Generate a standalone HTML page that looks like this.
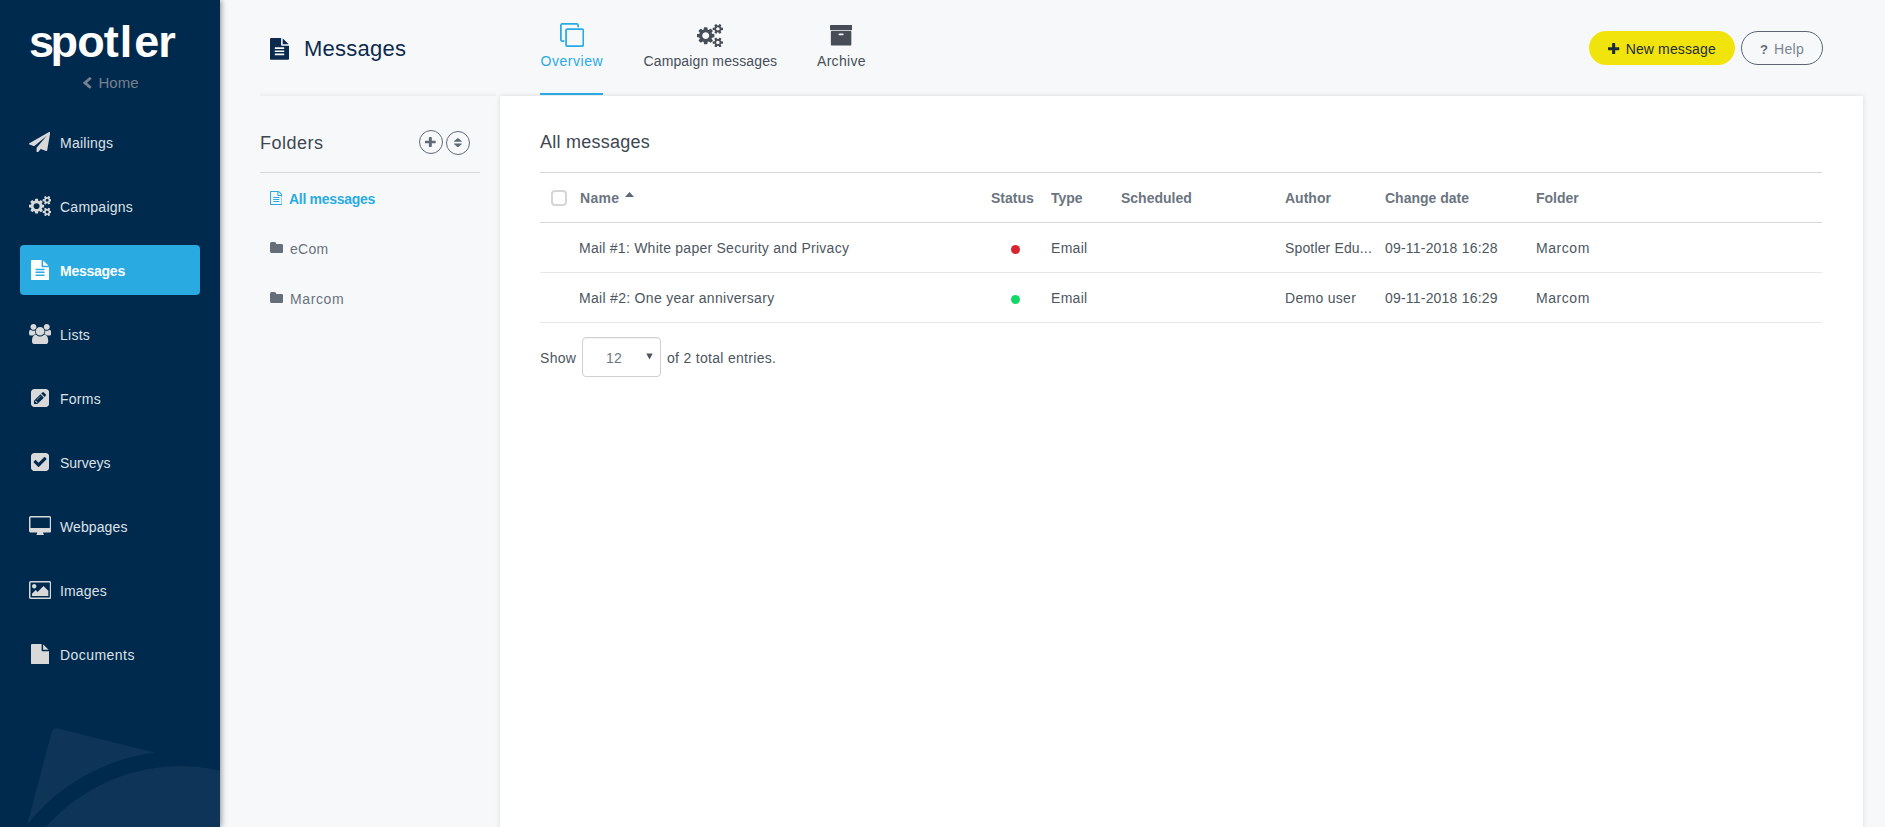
<!DOCTYPE html>
<html lang="en">
<head>
<meta charset="utf-8">
<title>Messages</title>
<style>
*{box-sizing:border-box;margin:0;padding:0}
html,body{width:1885px;height:827px;overflow:hidden}
body{background:#f7f8fa;font-family:"Liberation Sans",sans-serif;font-size:14px;color:#4a545e;position:relative}
.abs{position:absolute}
.t{position:absolute;white-space:nowrap;line-height:1}
/* sidebar */
#side{position:absolute;left:0;top:0;width:220px;height:827px;background:#00294e;box-shadow:1px 0 6px rgba(0,0,0,.44);overflow:hidden;z-index:5}
#logo{left:29px;top:19px;font-size:45px;font-weight:bold;color:#fff;letter-spacing:-.55px}
#home{left:98.500px;top:75px;font-size:15px;color:#77818f}
.nav{position:absolute;left:20px;width:180px;height:50px;border-radius:4px}
.nav span{position:absolute;left:40px;top:19px;font-size:14px;line-height:1;color:#dde1e6;white-space:nowrap;letter-spacing:.25px}
.nav.act{background:#29abe2}
.nav.act span{font-weight:bold;color:#fff;letter-spacing:-.25px}
/* header */
#title{left:304px;top:38px;font-size:22px;color:#0c2a4e;letter-spacing:.25px}
.tab{position:absolute;top:54px;font-size:14px;line-height:1;color:#464f59;white-space:nowrap;letter-spacing:.3px}
#panel{position:absolute;left:500px;top:96px;width:1363px;height:740px;background:#fff;box-shadow:0 0 5px rgba(0,0,0,.12)}
.hline{position:absolute;height:1px;background:#d5d7da}
.h2{font-size:18px;color:#3e4751;letter-spacing:.5px}
.fold{font-size:14px;color:#69727c;letter-spacing:.25px}
.th{font-size:14px;font-weight:bold;color:#6b7580;letter-spacing:0}
.td{font-size:14px;color:#4d5660;letter-spacing:.3px}
</style>
</head>
<body>

<div id="side">
  <svg class="abs" style="left:0;top:700px" width="220" height="127" viewBox="0 700 220 127">
    <path d="M27 825 L51.360 733 Q52.900 727.200 58.720 728.650 L155 752.600 A194.500 194.500 0 0 0 27 825 Z" fill="#0e3457"/>
    <circle cx="180.500" cy="945" r="179" fill="#0e3457"/>
  </svg>
  <div class="t" id="logo" aria-label="spotler" title="spotler"><span style="letter-spacing:-3.650px">s</span><span style="letter-spacing:-.55px">p</span><span style="letter-spacing:-1.050px">o</span><span style="letter-spacing:.95px">t</span><span style="letter-spacing:2.050px">l</span><span style="letter-spacing:-1.050px">e</span><span style="letter-spacing:0">r</span></div>
  <svg class="abs" style="left:83px;top:77px" width="8.6" height="11.7" viewBox="410 26 1036 1612" preserveAspectRatio="none"><path fill="#77818f" d="M1427 301l-531 531 531 531q19 19 19 45t-19 45l-166 166q-19 19-45 19t-45-19l-742-742q-19-19-19-45t19-45l742-742q19-19 45-19t45 19l166 166q19 19 19 45t-19 45z"/></svg>
  <div class="t" id="home">Home</div>

  <div class="nav" style="top:117px"><span>Mailings</span></div>
  <svg class="abs" style="left:29.2px;top:131.6px" width="21.2" height="20.6" viewBox="-0.11 0 1792.03 1792" preserveAspectRatio="none"><path fill="#d9d9d9" d="M1764 11q33 24 27 64l-256 1536q-5 29-32 45-14 8-31 8-11 0-24-5l-453-185-242 295q-18 23-49 23-13 0-22-4-19-7-30.500-23.500t-11.500-36.500v-349l864-1059-1069 925-395-162q-37-14-40-55-2-40 32-59l1664-960q15-9 32-9 20 0 36 11z"/></svg>
  <div class="nav" style="top:181px"><span>Campaigns</span></div>
  <svg class="abs" style="left:28.8px;top:195.7px" width="22.7" height="20.2" viewBox="0 -240 1920 1761" preserveAspectRatio="none"><path fill="#d9d9d9" d="M896 640q0-106-75-181t-181-75-181 75-75 181 75 181 181 75 181-75 75-181zm768 512q0-52-38-90t-90-38-90 38-38 90q0 53 37.500 90.500t90.500 37.500 90.500-37.500 37.500-90.500zm0-1024q0-52-38-90t-90-38-90 38-38 90q0 53 37.500 90.500t90.500 37.500 90.500-37.500 37.500-90.500zm-384 421v185q0 10-7 19.500t-16 10.500l-155 24q-11 35-32 76 34 48 90 115 7 11 7 20 0 12-7 19-23 30-82.500 89.500t-78.500 59.500q-11 0-21-7l-115-90q-37 19-77 31-11 108-23 155-7 24-30 24h-186q-11 0-20-7.500t-10-17.500l-23-153q-34-10-75-31l-118 89q-7 7-20 7-11 0-21-8-144-133-144-160 0-9 7-19 10-14 41-53t47-61q-23-44-35-82l-152-24q-10-1-17-9.500t-7-19.500v-185q0-10 7-19.500t16-10.500l155-24q11-35 32-76-34-48-90-115-7-11-7-20 0-12 7-20 22-30 82-89t79-59q11 0 21 7l115 90q34-18 77-32 11-108 23-154 7-24 30-24h186q11 0 20 7.500t10 17.500l23 153q34 10 75 31l118-89q8-7 20-7 11 0 21 8 144 133 144 160 0 8-7 19-12 16-42 54t-45 60q23 48 34 82l152 23q10 2 17 10.500t7 19.500zm640 533v140q0 16-149 31-12 27-30 52 51 113 51 138 0 4-4 7-122 71-124 71-8 0-46-47t-52-68q-20 2-30 2t-30-2q-14 21-52 68t-46 47q-2 0-124-71-4-3-4-7 0-25 51-138-18-25-30-52-149-15-149-31v-140q0-16 149-31 13-29 30-52-51-113-51-138 0-4 4-7 4-2 35-20t59-34 30-16q8 0 46 46.500t52 67.500q20-2 30-2t30 2q51-71 92-112l6-2q4 0 124 70 4 3 4 7 0 25-51 138 17 23 30 52 149 15 149 31zm0-1024v140q0 16-149 31-12 27-30 52 51 113 51 138 0 4-4 7-122 71-124 71-8 0-46-47t-52-68q-20 2-30 2t-30-2q-14 21-52 68t-46 47q-2 0-124-71-4-3-4-7 0-25 51-138-18-25-30-52-149-15-149-31v-140q0-16 149-31 13-29 30-52-51-113-51-138 0-4 4-7 4-2 35-20t59-34 30-16q8 0 46 46.500t52 67.500q20-2 30-2t30 2q51-71 92-112l6-2q4 0 124 70 4 3 4 7 0 25-51 138 17 23 30 52 149 15 149 31z"/></svg>
  <div class="nav act" style="top:245px"><span>Messages</span></div>
  <svg class="abs" style="left:31px;top:259.7px" width="18.15" height="20.3" viewBox="128 0 1536 1792" preserveAspectRatio="none"><path fill="#ffffff" d="M1596 476q14 14 28 36h-472v-472q22 14 36 28zm-476 164h544v1056q0 40-28 68t-68 28h-1344q-40 0-68-28t-28-68v-1600q0-40 28-68t68-28h800v544q0 40 28 68t68 28zm160 736v-64q0-14-9-23t-23-9h-704q-14 0-23 9t-9 23v64q0 14 9 23t23 9h704q14 0 23-9t9-23zm0-256v-64q0-14-9-23t-23-9h-704q-14 0-23 9t-9 23v64q0 14 9 23t23 9h704q14 0 23-9t9-23zm0-256v-64q0-14-9-23t-23-9h-704q-14 0-23 9t-9 23v64q0 14 9 23t23 9h704q14 0 23-9t9-23z"/></svg>
  <div class="nav" style="top:309px"><span>Lists</span></div>
  <svg class="abs" style="left:29px;top:323.8px" width="22.2" height="20.3" viewBox="0 0 1920 1792" preserveAspectRatio="none"><path fill="#d9d9d9" d="M593 896q-162 5-265 128h-134q-82 0-138-40.500t-56-118.500q0-353 124-353 6 0 43.500 21t97.500 42.500 119 21.500q67 0 133-23-5 37-5 66 0 139 81 256zm1071 637q0 120-73 189.500t-194 69.500h-874q-121 0-194-69.500t-73-189.500q0-53 3.500-103.500t14-109 26.500-108.500 43-97.500 62-81 85.500-53.500 111.500-20q10 0 43 21.500t73 48 107 48 135 21.500 135-21.500 107-48 73-48 43-21.500q61 0 111.500 20t85.500 53.500 62 81 43 97.500 26.500 108.500 14 109 3.500 103.500zm-1024-1277q0 106-75 181t-181 75-181-75-75-181 75-181 181-75 181 75 75 181zm704 384q0 159-112.500 271.500t-271.500 112.500-271.500-112.500-112.500-271.500 112.500-271.500 271.500-112.500 271.500 112.500 112.500 271.500zm576 225q0 78-56 118.500t-138 40.500h-134q-103-123-265-128 81-117 81-256 0-29-5-66 66 23 133 23 59 0 119-21.500t97.500-42.500 43.500-21q124 0 124 353zm-128-609q0 106-75 181t-181 75-181-75-75-181 75-181 181-75 181 75 75 181z"/></svg>
  <div class="nav" style="top:373px"><span>Forms</span></div>
  <svg class="abs" style="left:31px;top:388.8px" width="18.1" height="18.1" viewBox="0 128 1536 1536" preserveAspectRatio="none"><path fill="#d9d9d9" d="M404 1108l152 152-52 52h-56v-96h-96v-56zm414-390q14 13-3 30l-291 291q-17 17-30 3-14-13 3-30l291-291q17-17 30-3zm-274 690l544-544-288-288-544 544v288h288zm608-608l92-92q28-28 28-68t-28-68l-152-152q-28-28-68-28t-68 28l-92 92zm384-384v960q0 119-84.500 203.500t-203.500 84.500h-960q-119 0-203.500-84.500t-84.500-203.500v-960q0-119 84.500-203.500t203.500-84.500h960q119 0 203.500 84.500t84.500 203.500z"/></svg>
  <div class="nav" style="top:437px"><span style="letter-spacing:0">Surveys</span></div>
  <svg class="abs" style="left:31px;top:452.8px" width="18.1" height="18.1" viewBox="128 128 1536 1536" preserveAspectRatio="none"><path fill="#d9d9d9" d="M813 1299l614-614q19-19 19-45t-19-45l-102-102q-19-19-45-19t-45 19l-467 467-211-211q-19-19-45-19t-45 19l-102 102q-19 19-19 45t19 45l358 358q19 19 45 19t45-19zm851-883v960q0 119-84.500 203.500t-203.500 84.500h-960q-119 0-203.500-84.500t-84.500-203.500v-960q0-119 84.500-203.500t203.500-84.500h960q119 0 203.500 84.500t84.500 203.500z"/></svg>
  <div class="nav" style="top:501px"><span style="letter-spacing:.1px">Webpages</span></div>
  <svg class="abs" style="left:28.8px;top:515.5px" width="22.3" height="19.6" viewBox="-64 0 1920 1664" preserveAspectRatio="none"><path fill="#d9d9d9" d="M1728 992v-832q0-13-9.500-22.500t-22.500-9.500h-1600q-13 0-22.500 9.500t-9.500 22.500v832q0 13 9.500 22.500t22.500 9.500h1600q13 0 22.500-9.500t9.500-22.500zm128-832v1088q0 66-47 113t-113 47h-544q0 37 16 77.500t32 71 16 43.500q0 26-19 45t-45 19h-512q-26 0-45-19t-19-45q0-14 16-44t32-70 16-78h-544q-66 0-113-47t-47-113v-1088q0-66 47-113t113-47h1600q66 0 113 47t47 113z"/></svg>
  <div class="nav" style="top:565px"><span style="letter-spacing:.15px">Images</span></div>
  <svg class="abs" style="left:28.8px;top:580.9px" width="22.3" height="18" viewBox="0 128 1920 1536" preserveAspectRatio="none"><path fill="#d9d9d9" d="M640 576q0 80-56 136t-136 56-136-56-56-136 56-136 136-56 136 56 56 136zm1024 384v448h-1408v-192l320-320 160 160 512-512zm96-704h-1600q-13 0-22.500 9.500t-9.500 22.500v1216q0 13 9.500 22.500t22.500 9.500h1600q13 0 22.500-9.500t9.500-22.500v-1216q0-13-9.500-22.500t-22.500-9.500zm160 32v1216q0 66-47 113t-113 47h-1600q-66 0-113-47t-47-113v-1216q0-66 47-113t113-47h1600q66 0 113 47t47 113z"/></svg>
  <div class="nav" style="top:629px"><span style="letter-spacing:.45px">Documents</span></div>
  <svg class="abs" style="left:31px;top:643.7px" width="18.15" height="20.4" viewBox="128 0 1536 1792" preserveAspectRatio="none"><path fill="#d9d9d9" d="M1152 512v-472q22 14 36 28l408 408q14 14 28 36h-472zm-128 32q0 40 28 68t68 28h544v1056q0 40-28 68t-68 28h-1344q-40 0-68-28t-28-68v-1600q0-40 28-68t68-28h800v544z"/></svg>
</div>

<!-- header -->
<svg class="abs" style="left:270px;top:38px" width="19" height="21.8" viewBox="128 0 1536 1792" preserveAspectRatio="none"><path fill="#0c2a4e" d="M1596 476q14 14 28 36h-472v-472q22 14 36 28zm-476 164h544v1056q0 40-28 68t-68 28h-1344q-40 0-68-28t-28-68v-1600q0-40 28-68t68-28h800v544q0 40 28 68t68 28zm160 736v-64q0-14-9-23t-23-9h-704q-14 0-23 9t-9 23v64q0 14 9 23t23 9h704q14 0 23-9t9-23zm0-256v-64q0-14-9-23t-23-9h-704q-14 0-23 9t-9 23v64q0 14 9 23t23 9h704q14 0 23-9t9-23zm0-256v-64q0-14-9-23t-23-9h-704q-14 0-23 9t-9 23v64q0 14 9 23t23 9h704q14 0 23-9t9-23z"/></svg>
<div class="t" id="title">Messages</div>

<div class="tab" style="left:540.500px;color:#29abe2;letter-spacing:.55px">Overview</div>
<div class="tab" style="left:643.500px;letter-spacing:.13px">Campaign messages</div>
<div class="tab" style="left:817px">Archive</div>
<div class="abs" style="left:540px;top:93px;width:63px;height:2px;background:#29abe2;z-index:3"></div>

<div class="abs" style="left:260px;top:91px;width:236px;height:5px;background:linear-gradient(to bottom,#f6f7f9 0,#f6f7f9 20%,#f5f6f8 20%,#f5f6f8 40%,#f2f3f5 40%,#f2f3f5 60%,#f0f1f3 60%,#f0f1f3 80%,#edeef0 80%)"></div>
<div id="panel"></div>

<!-- tab icons -->
<svg class="abs" style="left:559.9px;top:23.1px" width="24.2" height="24.1" viewBox="0 0 1792 1792" preserveAspectRatio="none"><path fill="#29abe2" d="M1664 1632v-1088q0-13-9.500-22.500t-22.500-9.500h-1088q-13 0-22.500 9.500t-9.500 22.500v1088q0 13 9.500 22.500t22.500 9.500h1088q13 0 22.500-9.500t9.500-22.500zm128-1088v1088q0 66-47 113t-113 47h-1088q-66 0-113-47t-47-113v-1088q0-66 47-113t113-47h1088q66 0 113 47t47 113zm-384-384v160h-128v-160q0-13-9.500-22.500t-22.500-9.500h-1088q-13 0-22.500 9.500t-9.500 22.500v1088q0 13 9.500 22.500t22.500 9.500h160v128h-160q-66 0-113-47t-47-113v-1088q0-66 47-113t113-47h1088q66 0 113 47t47 113z"/></svg>
<svg class="abs" style="left:697px;top:23.7px" width="26.1" height="23.4" viewBox="0 -240 1920 1761" preserveAspectRatio="none"><path fill="#464d56" d="M896 640q0-106-75-181t-181-75-181 75-75 181 75 181 181 75 181-75 75-181zm768 512q0-52-38-90t-90-38-90 38-38 90q0 53 37.500 90.500t90.500 37.500 90.500-37.500 37.500-90.500zm0-1024q0-52-38-90t-90-38-90 38-38 90q0 53 37.500 90.500t90.500 37.500 90.500-37.500 37.500-90.500zm-384 421v185q0 10-7 19.500t-16 10.500l-155 24q-11 35-32 76 34 48 90 115 7 11 7 20 0 12-7 19-23 30-82.500 89.500t-78.500 59.500q-11 0-21-7l-115-90q-37 19-77 31-11 108-23 155-7 24-30 24h-186q-11 0-20-7.500t-10-17.500l-23-153q-34-10-75-31l-118 89q-7 7-20 7-11 0-21-8-144-133-144-160 0-9 7-19 10-14 41-53t47-61q-23-44-35-82l-152-24q-10-1-17-9.500t-7-19.500v-185q0-10 7-19.500t16-10.500l155-24q11-35 32-76-34-48-90-115-7-11-7-20 0-12 7-20 22-30 82-89t79-59q11 0 21 7l115 90q34-18 77-32 11-108 23-154 7-24 30-24h186q11 0 20 7.500t10 17.500l23 153q34 10 75 31l118-89q8-7 20-7 11 0 21 8 144 133 144 160 0 8-7 19-12 16-42 54t-45 60q23 48 34 82l152 23q10 2 17 10.500t7 19.500zm640 533v140q0 16-149 31-12 27-30 52 51 113 51 138 0 4-4 7-122 71-124 71-8 0-46-47t-52-68q-20 2-30 2t-30-2q-14 21-52 68t-46 47q-2 0-124-71-4-3-4-7 0-25 51-138-18-25-30-52-149-15-149-31v-140q0-16 149-31 13-29 30-52-51-113-51-138 0-4 4-7 4-2 35-20t59-34 30-16q8 0 46 46.500t52 67.500q20-2 30-2t30 2q51-71 92-112l6-2q4 0 124 70 4 3 4 7 0 25-51 138 17 23 30 52 149 15 149 31zm0-1024v140q0 16-149 31-12 27-30 52 51 113 51 138 0 4-4 7-122 71-124 71-8 0-46-47t-52-68q-20 2-30 2t-30-2q-14 21-52 68t-46 47q-2 0-124-71-4-3-4-7 0-25 51-138-18-25-30-52-149-15-149-31v-140q0-16 149-31 13-29 30-52-51-113-51-138 0-4 4-7 4-2 35-20t59-34 30-16q8 0 46 46.500t52 67.500q20-2 30-2t30 2q51-71 92-112l6-2q4 0 124 70 4 3 4 7 0 25-51 138 17 23 30 52 149 15 149 31z"/></svg>
<svg class="abs" style="left:829.9px;top:25.3px" width="22.2" height="20.5" viewBox="64 128 1664 1536" preserveAspectRatio="none"><path fill="#464d56" d="M1088 832q0-26-19-45t-45-19h-256q-26 0-45 19t-19 45 19 45 45 19h256q26 0 45-19t19-45zm576-192v960q0 26-19 45t-45 19h-1408q-26 0-45-19t-19-45v-960q0-26 19-45t45-19h1408q26 0 45 19t19 45zm64-448v256q0 26-19 45t-45 19h-1536q-26 0-45-19t-19-45v-256q0-26 19-45t45-19h1536q26 0 45 19t19 45z"/></svg>

<!-- buttons -->
<div class="abs" style="left:1589px;top:31px;width:146px;height:34px;border-radius:17px;background:#f1e40d"></div>
<svg class="abs" style="left:1608.3px;top:42.8px" width="11.3" height="11.4" viewBox="192 128 1408 1408" preserveAspectRatio="none"><path fill="#1b2a3a" d="M1600 736v192q0 40-28 68t-68 28h-416v416q0 40-28 68t-68 28h-192q-40 0-68-28t-28-68v-416h-416q-40 0-68-28t-28-68v-192q0-40 28-68t68-28h416v-416q0-40 28-68t68-28h192q40 0 68 28t28 68v416h416q40 0 68 28t28 68z"/></svg>
<div class="t" style="left:1625.700px;top:42px;font-size:14px;color:#1f2c39;letter-spacing:.13px">New message</div>
<div class="abs" style="left:1741px;top:31px;width:82px;height:34px;border-radius:17px;border:1px solid #5b6672"></div>
<div class="t" style="left:1760px;top:43px;font-size:13px;font-weight:bold;color:#5f6a76">?</div>
<div class="t" style="left:1774px;top:42px;font-size:14px;color:#7a8592;letter-spacing:.3px">Help</div>

<!-- folders -->
<div class="t h2" style="left:260px;top:134px">Folders</div>
<div class="abs" style="left:419px;top:130px;width:24px;height:24px;border-radius:12px;border:1px solid #606a74"></div>
<svg class="abs" style="left:425.2px;top:137.2px" width="10.7" height="10" viewBox="192 128 1408 1408" preserveAspectRatio="none"><path fill="#606a74" d="M1600 736v192q0 40-28 68t-68 28h-416v416q0 40-28 68t-68 28h-192q-40 0-68-28t-28-68v-416h-416q-40 0-68-28t-28-68v-192q0-40 28-68t68-28h416v-416q0-40 28-68t68-28h192q40 0 68 28t28 68v416h416q40 0 68 28t28 68z"/></svg>
<div class="abs" style="left:446px;top:131px;width:24px;height:24px;border-radius:12px;border:1px solid #606a74"></div>
<svg class="abs" style="left:454.3px;top:137.9px" width="7.8" height="9.3" viewBox="384 192 1024 1408" preserveAspectRatio="none"><path fill="#606a74" d="M1408 1088q0 26-19 45l-448 448q-19 19-45 19t-45-19l-448-448q-19-19-19-45t19-45 45-19h896q26 0 45 19t19 45zm0-384q0 26-19 45t-45 19h-896q-26 0-45-19t-19-45 19-45l448-448q19-19 45-19t45 19l448 448q19 19 19 45z"/></svg>
<div class="hline" style="left:260px;top:172px;width:220px"></div>

<svg class="abs" style="left:269.8px;top:191.1px" width="12.6" height="13.9" viewBox="128 0 1536 1792" preserveAspectRatio="none"><path fill="#29abe2" d="M1596 380q28 28 48 76t20 88v1152q0 40-28 68t-68 28h-1344q-40 0-68-28t-28-68v-1600q0-40 28-68t68-28h896q40 0 88 20t76 48zm-444-244v376h376q-10-29-22-41l-313-313q-12-12-41-22zm384 1528v-1024h-416q-40 0-68-28t-28-68v-416h-768v1536h1280zm-1024-864q0-14 9-23t23-9h704q14 0 23 9t9 23v64q0 14-9 23t-23 9h-704q-14 0-23-9t-9-23v-64zm736 224q14 0 23 9t9 23v64q0 14-9 23t-23 9h-704q-14 0-23-9t-9-23v-64q0-14 9-23t23-9h704zm0 256q14 0 23 9t9 23v64q0 14-9 23t-23 9h-704q-14 0-23-9t-9-23v-64q0-14 9-23t23-9h704z"/></svg>
<div class="t" style="left:289px;top:192px;font-size:14px;font-weight:bold;color:#29abe2;letter-spacing:-.3px">All messages</div>
<svg class="abs" style="left:269.8px;top:242px" width="13.4" height="11" viewBox="64 128 1664 1408" preserveAspectRatio="none"><path fill="#666f79" d="M1728 608v704q0 92-66 158t-158 66h-1216q-92 0-158-66t-66-158v-960q0-92 66-158t158-66h320q92 0 158 66t66 158v32h672q92 0 158 66t66 158z"/></svg>
<div class="t fold" style="left:290px;top:242px">eCom</div>
<svg class="abs" style="left:269.8px;top:292px" width="13.4" height="11" viewBox="64 128 1664 1408" preserveAspectRatio="none"><path fill="#666f79" d="M1728 608v704q0 92-66 158t-158 66h-1216q-92 0-158-66t-66-158v-960q0-92 66-158t158-66h320q92 0 158 66t66 158v32h672q92 0 158 66t66 158z"/></svg>
<div class="t fold" style="left:290px;top:292px;letter-spacing:.6px">Marcom</div>

<!-- table -->
<div style="position:absolute;left:0;top:0;z-index:2">
<div class="t h2" style="left:540px;top:133px;letter-spacing:.25px">All messages</div>
<div class="hline" style="left:540px;top:172px;width:1282px"></div>
<div class="abs" style="left:551px;top:190px;width:16px;height:16px;border:2px solid #d6d6d6;border-radius:4px;background:#fff"></div>
<div class="t th" style="left:580px;top:191px;letter-spacing:.3px">Name</div>
<svg class="abs" style="left:625px;top:192px" width="9" height="5" viewBox="0 0 9 5"><path d="M4.500 0 L9 5 H0z" fill="#5d6975"/></svg>
<div class="t th" style="left:991px;top:191px">Status</div>
<div class="t th" style="left:1051px;top:191px">Type</div>
<div class="t th" style="left:1121px;top:191px">Scheduled</div>
<div class="t th" style="left:1285px;top:191px">Author</div>
<div class="t th" style="left:1385px;top:191px">Change date</div>
<div class="t th" style="left:1536px;top:191px">Folder</div>
<div class="hline" style="left:540px;top:222px;width:1282px"></div>

<div class="t td" style="left:579px;top:241px;letter-spacing:.25px">Mail #1: White paper Security and Privacy</div>
<div class="abs" style="left:1010.500px;top:244.800px;width:9px;height:9px;border-radius:4.500px;background:#d9232e"></div>
<div class="t td" style="left:1051px;top:241px">Email</div>
<div class="t td" style="left:1285px;top:241px;letter-spacing:.15px">Spotler Edu...</div>
<div class="t td" style="left:1385px;top:241px;letter-spacing:.2px">09-11-2018 16:28</div>
<div class="t td" style="left:1536px;top:241px;letter-spacing:.55px">Marcom</div>
<div class="hline" style="left:540px;top:272px;width:1282px;background:#e6e8ea"></div>

<div class="t td" style="left:579px;top:291px">Mail #2: One year anniversary</div>
<div class="abs" style="left:1010.800px;top:294.800px;width:9px;height:9px;border-radius:4.500px;background:#12d965"></div>
<div class="t td" style="left:1051px;top:291px">Email</div>
<div class="t td" style="left:1285px;top:291px">Demo user</div>
<div class="t td" style="left:1385px;top:291px;letter-spacing:.2px">09-11-2018 16:29</div>
<div class="t td" style="left:1536px;top:291px;letter-spacing:.55px">Marcom</div>
<div class="hline" style="left:540px;top:322px;width:1282px;background:#e6e8ea"></div>

<div class="t td" style="left:540px;top:351px">Show</div>
<div class="abs" style="left:582px;top:337px;width:79px;height:40px;border:1.500px solid #d0d0d0;border-radius:4px;background:#fff;box-shadow:inset 0 1px 1px rgba(0,0,0,.05)"></div>
<div class="t td" style="left:606px;top:351px;color:#6d7680">12</div>
<svg class="abs" style="left:646px;top:353px" width="7" height="7" viewBox="0 0 7 7"><path d="M.3 .5h6.400L3.500 6.500z" fill="#4d5660"/></svg>
<div class="t td" style="left:667px;top:351px">of 2 total entries.</div>
</div>

</body>
</html>
